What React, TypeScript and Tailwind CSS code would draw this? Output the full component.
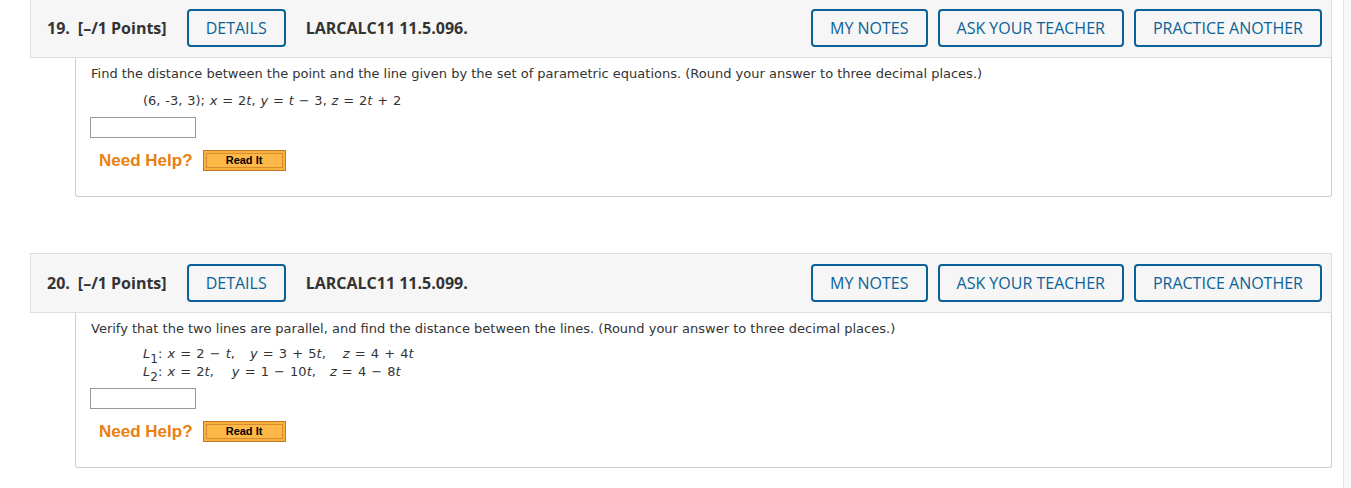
import React from "react";

function OutlineBtn({ children }: { children: React.ReactNode }) {
  return (
    <div className="h-[38px] flex items-center px-[17px] border-2 border-[#0b6298] rounded-[4px] text-[#0b6298] text-[16px] font-medium bg-[#f6f6f6]">
      {children}
    </div>
  );
}

function Header({ num, code }: { num: string; code: string }) {
  return (
    <div className="h-[60px] flex items-center border border-[#dedede] bg-[#f6f6f6] pl-[16px] pr-[9px] text-[#333]" style={{ fontFamily: '"Open Sans", sans-serif' }}>
      <span className="font-bold text-[16px]">{num}</span>
      <span className="font-bold text-[16px] ml-[8px]">[–/1 Points]</span>
      <div className="ml-[20px]">
        <OutlineBtn>DETAILS</OutlineBtn>
      </div>
      <span className="font-bold text-[16px] ml-[20px]">{code}</span>
      <div className="ml-auto flex gap-[10px]">
        <OutlineBtn>MY NOTES</OutlineBtn>
        <OutlineBtn>ASK YOUR TEACHER</OutlineBtn>
        <OutlineBtn>PRACTICE ANOTHER</OutlineBtn>
      </div>
    </div>
  );
}

function Help() {
  return (
    <div className="flex items-center mt-[12px] ml-[8px] h-[21px]" style={{ fontFamily: '"Liberation Sans", Arial, sans-serif' }}>
      <span className="text-[#ea800e] font-bold text-[17px] leading-none">Need Help?</span>
      <div className="ml-[10px] w-[83px] h-[21px] border border-[#c77528] bg-[#f9b13e] p-[2px]">
        <div className="w-full h-full border border-[#d98c2f] bg-[#fdb947] flex items-center justify-center text-[11px] font-bold text-black leading-none">
          Read It
        </div>
      </div>
    </div>
  );
}

function Input() {
  return <div className="-ml-px w-[106px] h-[21px] border border-[#999] bg-white" />;
}

function Sub({ n }: { n: string }) {
  return <span className="relative top-[5px] text-[12px] leading-none">{n}</span>;
}

export default function App() {
  const verdana = { fontFamily: '"DejaVu Sans", Verdana, sans-serif' };
  return (
    <div className="w-[1351px] h-[488px] overflow-hidden bg-white flex">
      <div className="w-[1343px] pl-[30px] pr-[11px]">
        <div className="-mt-[2px]">
          <Header num="19." code="LARCALC11 11.5.096." />
          <div className="ml-[45px] border-x border-b border-[#cfcfcf] rounded-b-[3px] pl-[15px] pt-[7px] pb-[25px] text-[#333] text-[13px] leading-[18px]" style={verdana}>
            <div>Find the distance between the point and the line given by the set of parametric equations. (Round your answer to three decimal places.)</div>
            <div className="mt-[9px] ml-[52px] [word-spacing:0.7px]">
              (6, -3, 3); <i>x</i> = 2<i>t</i>, <i>y</i> = <i>t</i> − 3, <i>z</i> = 2<i>t</i> + 2
            </div>
            <div className="mt-[7px]"><Input /></div>
            <Help />
          </div>
        </div>
        <div className="mt-[56px]">
          <Header num="20." code="LARCALC11 11.5.099." />
          <div className="ml-[45px] border-x border-b border-[#cfcfcf] rounded-b-[3px] pl-[15px] pt-[7px] pb-[25px] text-[#333] text-[13px] leading-[18px]" style={verdana}>
            <div>Verify that the two lines are parallel, and find the distance between the lines. (Round your answer to three decimal places.)</div>
            <div className="mt-[7px] ml-[52px] [word-spacing:1px]">
              <div>
                <i>L</i><Sub n="1" />: <i>x</i> = 2 − <i>t</i>,<span className="inline-block w-[15px]" /><i>y</i> = 3 + 5<i>t</i>,<span className="inline-block w-[17px]" /><i>z</i> = 4 + 4<i>t</i>
              </div>
              <div>
                <i>L</i><Sub n="2" />: <i>x</i> = 2<i>t</i>,<span className="inline-block w-[18px]" /><i>y</i> = 1 − 10<i>t</i>,<span className="inline-block w-[14px]" /><i>z</i> = 4 − 8<i>t</i>
              </div>
            </div>
            <div className="mt-[7px]"><Input /></div>
            <Help />
          </div>
        </div>
      </div>
      <div className="flex-1 border-l border-[#e4e4e4] bg-[#f7f7f7]" />
    </div>
  );
}
